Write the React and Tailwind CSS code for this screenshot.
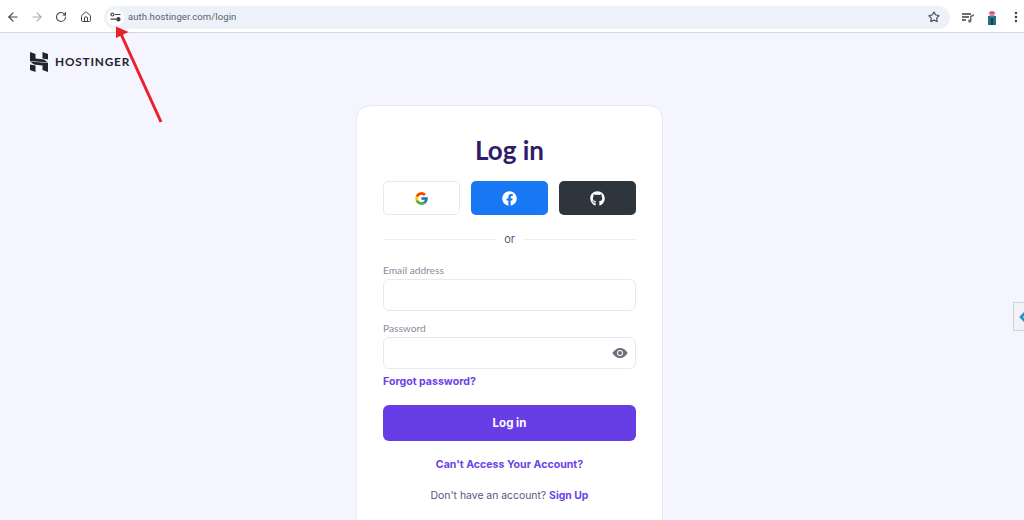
import { ArrowLeft, ArrowRight, ChevronLeft, EllipsisVertical, House, RotateCw, Star } from "lucide-react";
import { FaFacebook, FaGithub } from "react-icons/fa";
import { FcGoogle } from "react-icons/fc";
import { IoEye } from "react-icons/io5";

function BrowserBar() {
  return (
    <header className="flex h-[33px] shrink-0 items-center border-b border-[#d5d6dc] bg-white pl-[6px] pr-[1px] pt-[2px]">
      <ArrowLeft className="h-[14px] w-[14px] text-[#3f4347]" strokeWidth={2} />
      <ArrowRight className="ml-[10px] h-[14px] w-[14px] text-[#a9acb0]" strokeWidth={2} />
      <RotateCw className="ml-[11px] h-[12px] w-[12px] text-[#3f4347]" strokeWidth={2.2} />
      <House className="ml-[13px] h-[12px] w-[12px] text-[#3f4347]" strokeWidth={2} />
      <div className="ml-[12px] flex h-[23px] w-[848px] items-center rounded-full bg-[#edf2fa] pl-[3px] pr-[10px]">
        <span className="flex h-[17px] w-[17px] items-center justify-center rounded-full bg-white">
          <svg width="11" height="10" viewBox="0 0 11 10" fill="none" stroke="#3f4347" strokeWidth="1.2">
            <circle cx="2.4" cy="2.5" r="1.5" />
            <path d="M5 2.5h5.5M0.5 7.2H6" />
            <circle cx="8.4" cy="7.2" r="1.6" fill="#3f4347" />
          </svg>
        </span>
        <span className="ml-[4px] font-['Roboto',sans-serif] text-[9.5px] tracking-[0.01em] text-[#5a5f66]">auth.hostinger.com/login</span>
        <Star className="ml-auto h-[12px] w-[12px] text-[#3f4347]" strokeWidth={2.2} />
      </div>
      <svg className="ml-[12px]" width="12" height="11" viewBox="0 0 12 11" fill="#6b6f74">
        <path d="M0 1h9v2H0zM0 4h7v2H0zM0 7h4v2H0z" />
        <path d="M8 4l4-2v2l-2.500 1V9a1.700 1.700 0 1 1-1.500-1.700z" />
      </svg>
      <svg className="ml-[13px]" width="10" height="15" viewBox="0 0 10 15">
        <rect x="1" y="6" width="8" height="9" fill="#1f6f8b" />
        <circle cx="5" cy="4" r="2.6" fill="#c98f76" />
        <path d="M1.500 3.200C2 .5 8 .5 8.500 3.200z" fill="#e0407f" />
        <rect x="4" y="8" width="2" height="7" fill="#123f55" />
      </svg>
      <EllipsisVertical className="ml-[12px] h-[14px] w-[14px] text-[#3f4347]" strokeWidth={2.4} />
    </header>
  );
}

function HostingerLogo() {
  return (
    <div className="flex items-center">
      <svg width="18" height="20" viewBox="0 0 18 20" fill="#23232b">
        <path d="M0 0L5.500 2V6.500L14 7.500L18 10.500L0 9z" />
        <path d="M18 20L12.500 18V13.500L4 12.500L0 9.500L18 11z" />
        <path d="M12.500 0L18 2V7.500L12.500 6.500z" />
        <path d="M5.500 20L0 18V12.500L5.500 13.500z" />
      </svg>
      <span className="ml-[7px] font-['Lato',sans-serif] text-[11.8px] font-bold tracking-[0.07em] text-[#23232b]">HOSTINGER</span>
    </div>
  );
}

function SocialButton({ className, children }) {
  return (
    <button className={`flex h-[34px] items-center justify-center rounded-[5px] ${className}`}>
      {children}
    </button>
  );
}

function Field({ label, children }) {
  return (
    <div>
      <label className="block font-['Lato',sans-serif] text-[10.2px] leading-[14px] text-[#8a8c99]">{label}</label>
      <div className="mt-[2px] flex h-[32px] items-center justify-end rounded-[6px] border border-[#e8e8ee] bg-white pr-[7px]">
        {children}
      </div>
    </div>
  );
}

function LoginCard() {
  return (
    <section className="ml-[356px] mt-[33px] h-[500px] w-[307px] shrink-0 rounded-t-[14px] border border-[#e9e9f3] bg-white px-[26px] pt-[28px]">
      <h1 className="text-center font-['Lato',sans-serif] text-[26px] font-bold leading-[32px] text-[#2f1c6a]">Log in</h1>

      <div className="mt-[15px] grid grid-cols-3 gap-[11px]">
        <SocialButton className="border border-[#e8e8ee] bg-white">
          <FcGoogle className="h-[15px] w-[15px]" />
        </SocialButton>
        <SocialButton className="bg-[#1877f2]">
          <FaFacebook className="h-[15px] w-[15px] text-white" />
        </SocialButton>
        <SocialButton className="bg-[#2f353c]">
          <FaGithub className="h-[15px] w-[15px] text-white" />
        </SocialButton>
      </div>

      <div className="mt-[16px] flex items-center gap-[8px]">
        <span className="h-px flex-1 bg-[#eeeef2]" />
        <span className="text-[11px] leading-[16px] text-[#5c5480]">or</span>
        <span className="h-px flex-1 bg-[#eeeef2]" />
      </div>

      <div className="mt-[16px] flex flex-col gap-[10px]">
        <Field label="Email address" />
        <Field label="Password">
          <IoEye className="h-[16px] w-[16px] text-[#6d6d7d]" />
        </Field>
      </div>

      <a className="mt-[5px] block text-[10.6px] font-bold leading-[16px] text-[#6d42e8]">Forgot password?</a>

      <button className="mt-[15px] h-[36px] w-full rounded-[6px] bg-[#673de6] pt-[2px] text-[11.5px] font-bold text-white">Log in</button>

      <a className="mt-[16px] block text-center text-[10.6px] font-bold leading-[16px] text-[#6d42e8]">Can't Access Your Account?</a>

      <p className="mt-[15px] text-center text-[10.4px] leading-[16px] text-[#5c5480]">
        Don't have an account? <a className="font-bold text-[#6d42e8]">Sign Up</a>
      </p>
    </section>
  );
}

export default function App() {
  return (
    <div className="relative flex h-[520px] w-[1024px] flex-col overflow-hidden bg-[#f4f5ff] font-['Inter',sans-serif]">
      <BrowserBar />
      <main className="min-h-0 flex-1">
        <div className="ml-[30px] mt-[19px] h-[20px]">
          <HostingerLogo />
        </div>
        <LoginCard />
      </main>

      {/* annotation arrow drawn over the page */}
      <svg className="absolute left-0 top-0" width="200" height="130" viewBox="0 0 200 130">
        <path d="M161 122L121 34" stroke="#ec2028" strokeWidth="3" />
        <path d="M116 26.500L128.500 32L116 38z" fill="#ec2028" />
      </svg>

      {/* side widget peeking in at the right edge */}
      <div className="absolute right-0 top-[302px] flex h-[29px] w-[11px] items-center border border-r-0 border-[#cfd3da] bg-[#f1f3f6]">
        <ChevronLeft className="ml-[1px] h-[16px] w-[16px] shrink-0 text-[#2a8fc5]" strokeWidth={4} />
      </div>
    </div>
  );
}
